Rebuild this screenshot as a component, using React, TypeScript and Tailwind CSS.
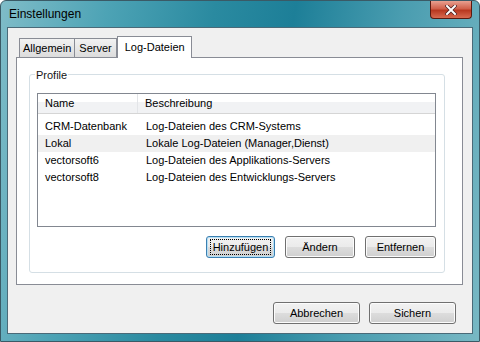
const rows = [
  { name: "CRM-Datenbank", desc: "Log-Dateien des CRM-Systems" },
  { name: "Lokal", desc: "Lokale Log-Dateien (Manager,Dienst)", hover: true },
  { name: "vectorsoft6", desc: "Log-Dateien des Applikations-Servers" },
  { name: "vectorsoft8", desc: "Log-Dateien des Entwicklungs-Servers" },
];

function Button({ label, focused, className }: { label: string; focused?: boolean; className: string }) {
  return (
    <div
      className={`flex items-center justify-center rounded-[3px] border h-[22px] bg-[linear-gradient(#f2f2f2_0%,#ebebeb_50%,#dddddd_50%,#cfcfcf_100%)] ${
        focused ? "border-[#3c7fb1] shadow-[inset_0_0_0_1px_#b5e0f5]" : "border-[#707070] shadow-[inset_0_0_0_1px_#fcfcfc]"
      } ${className}`}
    >
      <span className={`px-[2px] leading-[14px] ${focused ? "outline outline-1 outline-dotted outline-black" : ""}`}>{label}</span>
    </div>
  );
}

export default function App() {
  return (
    <div
      className="w-[480px] h-[342px] overflow-hidden text-[11px] text-black"
      style={{ fontFamily: '"Liberation Sans", Arial, sans-serif' }}
    >
      <div className="relative flex flex-col h-full rounded-t-[6px] border border-[#3a5a66] bg-[linear-gradient(100deg,#7fbcc8_0%,#4da3b5_20%,#2a8aa0_40%,#1d7f98_55%,#4a9db0_75%,#78b8c4_100%)] px-[6px] pb-[7px]">
        {/* Title bar */}
        <div className="flex items-center h-[26px] pl-[2px] text-[12px] text-black">Einstellungen</div>
        <div className="absolute right-[7px] top-0 w-[42px] h-[18px] rounded-b-[4px] border border-[#5a1a10] border-t-0 bg-[linear-gradient(#e8a090_0%,#d0604a_45%,#b83820_55%,#d86a50_100%)] flex items-center justify-center">
          <svg width="12" height="10" viewBox="0 0 12 10">
            <path d="M2 1 L10 9 M10 1 L2 9" stroke="#4a2020" strokeWidth="3.4" strokeLinecap="square" />
            <path d="M2 1 L10 9 M10 1 L2 9" stroke="#fff" strokeWidth="2" strokeLinecap="square" />
          </svg>
        </div>

        {/* Client area */}
        <div className="flex flex-col flex-1 border border-[#4a6a78] bg-[#f0f0f0] px-[8px] pt-[8px]">
          {/* Tabs */}
          <div className="flex items-end h-[21px] pl-[3px]">
            <div className="h-[19px] px-[3px] mt-[2px] flex items-center border border-b-0 border-[#898c95] bg-[linear-gradient(#f2f2f2,#dcdcdc)]">Allgemein</div>
            <div className="h-[19px] px-[4px] flex items-center border border-l-0 border-b-0 border-[#898c95] bg-[linear-gradient(#f2f2f2,#dcdcdc)]">Server</div>
            <div className="relative z-10 -mb-px h-[22px] w-[75px] pl-[7px] flex items-center border border-b-0 border-[#898c95] bg-white">Log-Dateien</div>
          </div>

          {/* Tab panel */}
          <div className="w-[447px] h-[228px] border border-[#898c95] bg-white px-[12px] pt-[16px]">
            <div className="relative h-[199px] w-[416px] rounded-[3px] border border-[#d5dfe5] px-[7px] pt-[18px]">
              <span className="absolute left-[5px] -top-[8px] bg-white px-[1px] text-[#151515]">Profile</span>
              {/* List */}
              <div className="h-[134px] w-[399px] border border-[#828790] bg-white">
                <div className="flex h-[20px] bg-[linear-gradient(#ffffff_0%,#ffffff_40%,#f1f2f4_41%,#f1f2f4_100%)] border-b border-[#d5d5d5]">
                  <div className="w-[100px] pl-[7px] flex items-center border-r border-[#e3e5e8]">Name</div>
                  <div className="flex-1 pl-[7px] flex items-center">Beschreibung</div>
                </div>
                <div className="pt-[4px]">
                  {rows.map((r) => (
                    <div key={r.name} className={`flex h-[17px] items-center ${r.hover ? "bg-[#f0f0f0]" : ""}`}>
                      <div className="w-[101px] pl-[7px]">{r.name}</div>
                      <div className="flex-1 pl-[7px]">{r.desc}</div>
                    </div>
                  ))}
                </div>
              </div>
              <div className="flex justify-end gap-[10px] mt-[9px] pr-[1px]">
                <Button label="Hinzufügen" focused className="w-[69px]" />
                <Button label="Ändern" className="w-[70px]" />
                <Button label="Entfernen" className="w-[71px]" />
              </div>
            </div>
          </div>

          {/* Dialog buttons */}
          <div className="flex justify-end gap-[9px] mt-[17px] pr-[8px]">
            <Button label="Abbrechen" className="w-[87px]" />
            <Button label="Sichern" className="w-[87px]" />
          </div>
        </div>
      </div>
    </div>
  );
}
